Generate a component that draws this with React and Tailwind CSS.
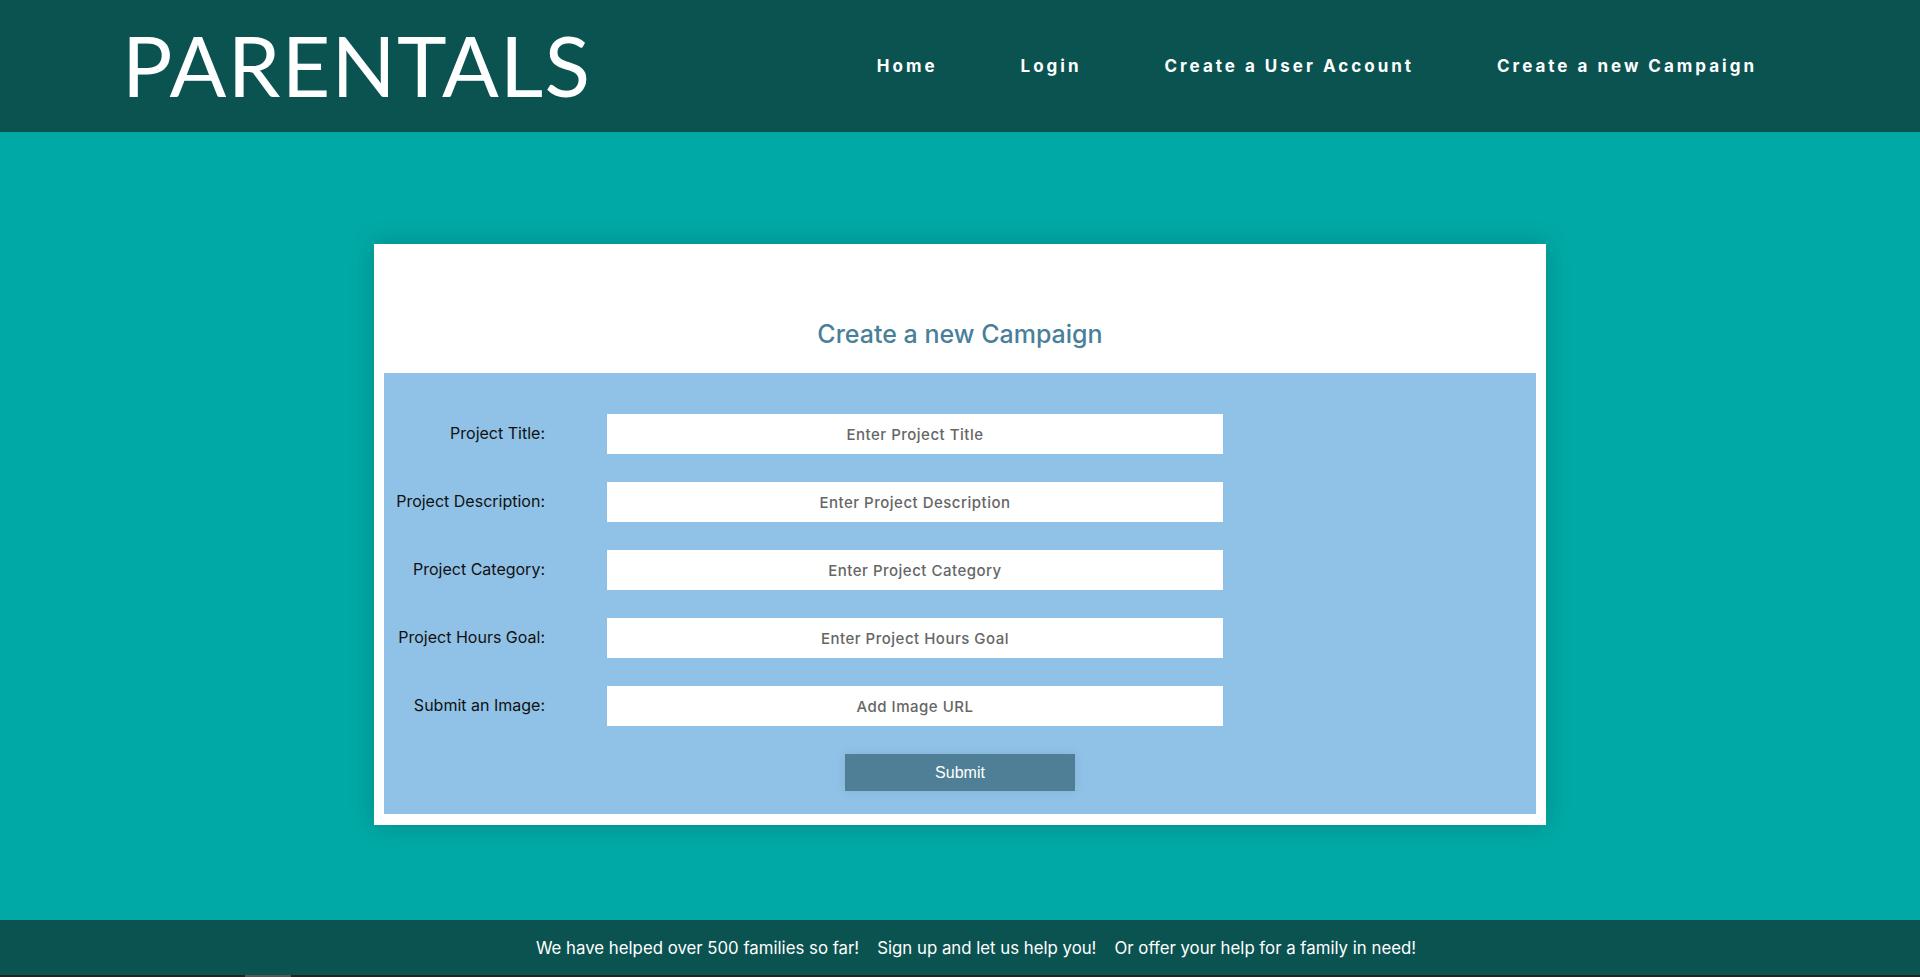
import React from 'react';

const fields = [
  { label: 'Project Title:', placeholder: 'Enter Project Title' },
  { label: 'Project Description:', placeholder: 'Enter Project Description' },
  { label: 'Project Category:', placeholder: 'Enter Project Category' },
  { label: 'Project Hours Goal:', placeholder: 'Enter Project Hours Goal' },
  { label: 'Submit an Image:', placeholder: 'Add Image URL' },
];

const navLinks = ['Home', 'Login', 'Create a User Account', 'Create a new Campaign'];

function Header() {
  return (
    <header className="h-[132px] bg-[#0b5351] flex items-center pl-[122px] pr-[163px]">
      <h1 className="text-white text-[84px] leading-none font-normal tracking-[1.3px] -mt-[3px]" style={{ fontFamily: 'Lato, sans-serif' }}>
        PARENTALS
      </h1>
      <nav className="ml-auto flex items-center gap-[83px] mt-[2px]">
        {navLinks.map((link) => (
          <a key={link} href="#" className="text-white text-[17px] font-bold tracking-[3px]">
            {link}
          </a>
        ))}
      </nav>
    </header>
  );
}

function CampaignForm() {
  return (
    <div className="w-[1172px] mx-auto bg-white pt-[72px] px-[10px] pb-[11px] shadow-[0_0_24px_rgba(0,0,0,0.18)]">
      <h2 className="text-center text-[25px] leading-[36px] font-medium text-[#4a7f9a] mb-[21px]">
        Create a new Campaign
      </h2>
      <form className="bg-[#90c1e6] pt-[41px] pb-[23px] flex flex-col">
        <div className="flex flex-col gap-[28px]">
          {fields.map((f) => (
            <div key={f.label} className="flex items-center">
              <label className="w-[161px] text-right text-[16px] text-[#111] -mt-[2px]">{f.label}</label>
              <input
                type="text"
                placeholder={f.placeholder}
                className="ml-[62px] w-[616px] h-[40px] bg-white text-center text-[15px] font-medium tracking-[0.5px] placeholder:text-[#666] outline-none"
              />
            </div>
          ))}
        </div>
        <button
          type="button"
          className="mt-[28px] mx-auto w-[230px] h-[37px] bg-[#4e7f96] text-white text-[16px] shadow-[0_0_12px_rgba(0,0,0,0.08)]"
          style={{ fontFamily: '"Liberation Sans", Arial, sans-serif' }}
        >
          Submit
        </button>
      </form>
    </div>
  );
}

function Footer() {
  return (
    <footer className="bg-[#0b5351]">
      <div className="h-[55px] pt-[2px] pl-[32px] flex items-center justify-center gap-[18px] text-white text-[16.8px]">
        <span>We have helped over 500 families so far!</span>
        <span>Sign up and let us help you!</span>
        <span>Or offer your help for a family in need!</span>
      </div>
      <div className="h-[2px] bg-[#222] pl-[245px]">
        <div className="w-[46px] h-full bg-[#555]" />
      </div>
    </footer>
  );
}

export default function App() {
  return (
    <div className="min-h-screen flex flex-col bg-[#00a9a5]" style={{ fontFamily: 'Inter, "Open Sans", sans-serif' }}>
      <Header />
      <main className="flex-1 pt-[112px] pb-[95px]">
        <CampaignForm />
      </main>
      <Footer />
    </div>
  );
}
